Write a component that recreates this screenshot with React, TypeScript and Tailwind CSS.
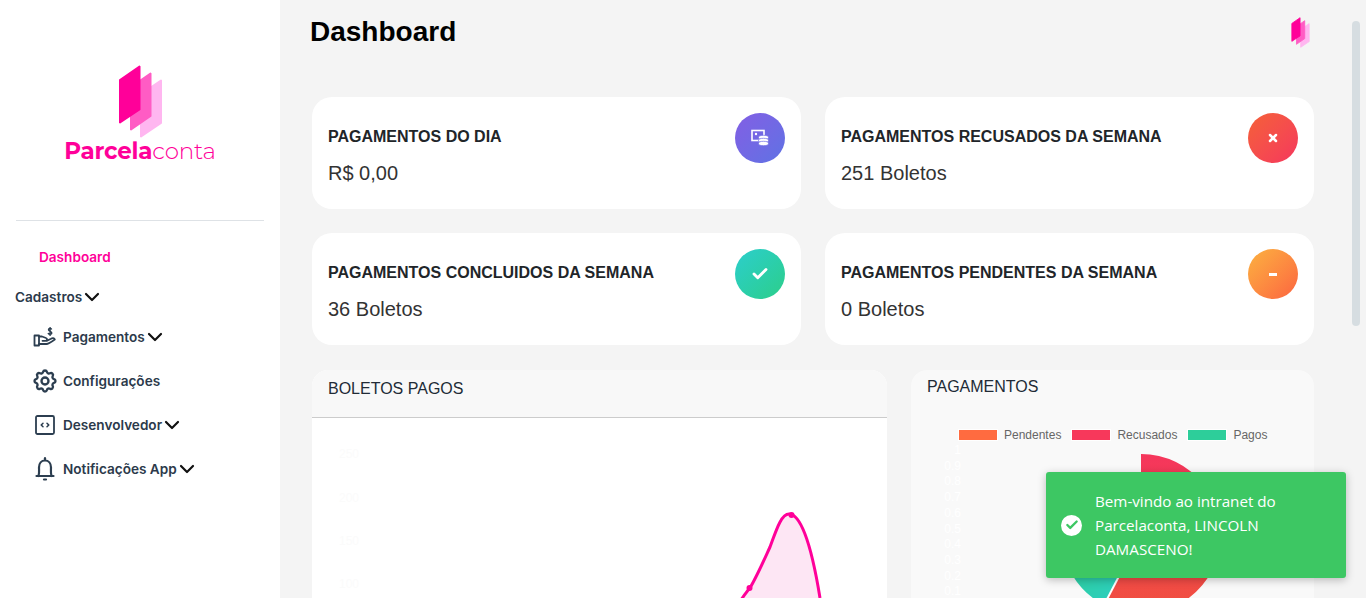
import { Check, ChevronDown, X } from "lucide-react";
import { TbSettings } from "react-icons/tb";
import type { ReactNode } from "react";

const sans = "font-['Liberation_Sans',Arial,sans-serif]";

function Logo({ className }: { className: string }) {
  return (
    <svg viewBox="118 64 45 73" className={className}>
      <path d="M141 93 L161 79.500 L161 122 L141 135.500 Z" fill="#ffb6f0" stroke="#ffb6f0" strokeWidth="2" strokeLinejoin="round" />
      <path d="M131 86 L150.500 72.500 L150.500 115 L131 128.500 Z" fill="#ff5cc4" stroke="#ff5cc4" strokeWidth="2" strokeLinejoin="round" />
      <path d="M120 79 L139.500 65.500 L139.500 108.500 L120 121.500 Z" fill="#ff0099" stroke="#ff0099" strokeWidth="2" strokeLinejoin="round" />
    </svg>
  );
}

function HandIcon() {
  return (
    <svg viewBox="0 0 23 20" className="w-[23px] h-5 text-[#2c3e50]" fill="none" stroke="currentColor" strokeWidth="1.800" strokeLinejoin="round" strokeLinecap="round">
      <path d="M1.500 8.500 H6 V18.500 H1.500 Z" />
      <path d="M6 9.500 H9 L13 11 C14.500 11.500 14.500 13.800 12.500 13.800 H9.500" />
      <path d="M6 17 H13.500 C15.500 17 19 14.500 21.800 12.500 C21 11 19.500 10.800 18 11.800 L14 13.800" />
      <path d="M18.500 2 C18 1.200 15.500 1 15.500 2.800 C15.500 4.800 18.800 4 18.800 5.900 C18.800 7.500 16 7.500 15.300 6.500 M17.100 .4 V8.400" strokeWidth="1.400" />
    </svg>
  );
}

function CodeIcon() {
  return (
    <svg viewBox="0 0 20 20" className="w-5 h-5 text-[#2c3e50]" fill="none" stroke="currentColor" strokeLinecap="round" strokeLinejoin="round">
      <rect x="1" y="1" width="18" height="18" rx="1.500" strokeWidth="1.800" />
      <path d="M8 8.200 L6.200 10 L8 11.800 M12 8.200 L13.800 10 L12 11.800" strokeWidth="1.500" />
    </svg>
  );
}

function BellIcon() {
  return (
    <svg viewBox="0 0 20 24" className="w-5 h-6 text-[#2c3e50]" fill="none" stroke="currentColor" strokeWidth="2.200" strokeLinecap="round" strokeLinejoin="round">
      <path d="M1.500 19 H18.500" />
      <path d="M3.500 19 C4.500 16 4 13 4 10.500 C4 6.500 6.500 3.500 10 3.500 C13.500 3.500 16 6.500 16 10.500 C16 13 15.500 16 16.500 19" />
      <path d="M10 1.200 V3" />
      <path d="M9 22.500 H11" />
    </svg>
  );
}

function CoinsScreenIcon() {
  return (
    <svg viewBox="0 0 18 18" className="w-[18px] h-[18px]" fill="none" stroke="white">
      <rect x="1" y="1.500" width="12" height="10" strokeWidth="1.600" />
      <circle cx="5" cy="5" r="1.200" fill="white" stroke="none" />
      <ellipse cx="12.500" cy="8.500" rx="5" ry="2.200" fill="white" stroke="#6a68e4" strokeWidth=".7" />
      <ellipse cx="12.500" cy="11.500" rx="5" ry="2.200" fill="white" stroke="#6a68e4" strokeWidth=".7" />
      <ellipse cx="12.500" cy="14.500" rx="5" ry="2.200" fill="white" stroke="#6a68e4" strokeWidth=".7" />
    </svg>
  );
}

function NavRow({ icon, label, chevron, rowClass }: { icon?: ReactNode; label: string; chevron?: boolean; rowClass: string }) {
  return (
    <div className={`flex items-center ${rowClass}`}>
      {icon && <span className="w-[37px] flex justify-center shrink-0">{icon}</span>}
      <span className="text-[13.600px] font-semibold text-[#2c3a4b] font-['Inter',sans-serif]">{label}</span>
      {chevron && <ChevronDown size={24} strokeWidth={2.200} className="text-[#111] -ml-[2px]" />}
    </div>
  );
}

function StatCard({ title, value, gradient, icon }: { title: string; value: string; gradient: string; icon: ReactNode }) {
  return (
    <div className="h-[112px] bg-white rounded-[20px] p-4 flex justify-between">
      <div>
        <p className="text-base font-bold leading-none mt-[16px] text-[#212529]">{title}</p>
        <p className="text-xl leading-none mt-[18px] text-[#333]">{value}</p>
      </div>
      <div className={`w-[50px] h-[50px] rounded-full flex items-center justify-center ${gradient}`}>{icon}</div>
    </div>
  );
}

export default function App() {
  const yLabels = ["1", "0.9", "0.8", "0.7", "0.6", "0.5", "0.4", "0.3", "0.2", "0.1"];

  return (
    <div className={`relative h-[598px] overflow-hidden flex bg-[#f4f4f4] ${sans}`}>
      <aside className="w-[280px] shrink-0 bg-white">
        <div className="h-[221px] mx-4 border-b border-[#dee2e6] flex flex-col items-center pt-[65px]">
          <Logo className="w-[45px] h-[73px] ml-px" />
          <p className="text-[23px] leading-none mt-[2px] text-[#ff0099] font-['Montserrat','Inter',sans-serif] tracking-[-0.2px]">
            <span className="font-bold">Parcela</span>
            <span className="font-light">conta</span>
          </p>
        </div>
        <nav className="pt-[16px]">
          <p className="pl-[39px] h-10 text-[13.600px] leading-10 font-semibold text-[#ff0099] font-['Inter',sans-serif]">Dashboard</p>
          <NavRow label="Cadastros" chevron rowClass="pl-[15px] h-10" />
          <NavRow icon={<HandIcon />} label="Pagamentos" chevron rowClass="pl-[26px] h-10" />
          <NavRow icon={<TbSettings size={28} strokeWidth={2} className="text-[#2c3e50]" />} label="Configurações" rowClass="pl-[26px] h-[48px]" />
          <NavRow icon={<CodeIcon />} label="Desenvolvedor" chevron rowClass="pl-[26px] h-10" />
          <NavRow icon={<BellIcon />} label="Notificações App" chevron rowClass="pl-[26px] h-[48px]" />
        </nav>
      </aside>

      <main className="flex-1 pl-[32px] pr-[52px]">
        <header className="h-[97px] flex justify-between items-start">
          <h1 className="text-[28px] leading-none font-bold text-black -ml-[2px] mt-[18px]">Dashboard</h1>
          <Logo className="w-[19px] h-[31px] mt-[17px] mr-[4px]" />
        </header>

        <div className="grid grid-cols-2 gap-6">
          <StatCard title="PAGAMENTOS DO DIA" value="R$ 0,00" gradient="bg-linear-to-br from-[#825ee4] to-[#5e72e4]" icon={<CoinsScreenIcon />} />
          <StatCard title="PAGAMENTOS RECUSADOS DA SEMANA" value="251 Boletos" gradient="bg-linear-to-br from-[#f56036] to-[#f5365c]" icon={<X size={12} strokeWidth={5} className="text-white" />} />
          <StatCard title="PAGAMENTOS CONCLUIDOS DA SEMANA" value="36 Boletos" gradient="bg-linear-to-br from-[#2dcecc] to-[#2dce89]" icon={<Check size={18} strokeWidth={3.800} className="text-white" />} />
          <StatCard title="PAGAMENTOS PENDENTES DA SEMANA" value="0 Boletos" gradient="bg-linear-to-br from-[#fbb140] to-[#fb6340]" icon={<span className="w-2 h-[3px] bg-white" />} />
        </div>

        <div className="flex gap-6 mt-[25px]">
          <section className="w-[575px] h-[300px] bg-white rounded-t-[16px] overflow-hidden">
            <div className="h-[48px] bg-[#f8f8f8] border-b border-[#cccccc] pl-4 pt-[10px] text-base leading-[18px] text-[#212b36]">BOLETOS PAGOS</div>
            <svg viewBox="0 0 575 252" className="w-[575px] h-[252px]">
              <defs>
                <clipPath id="plotArea">
                  <rect x="0" y="0" width="575" height="180" />
                </clipPath>
              </defs>
              <g fill="#fbfbfb" fontSize="12" textAnchor="middle">
                <text x="37" y="40">250</text>
                <text x="37" y="84">200</text>
                <text x="37" y="127">150</text>
                <text x="37" y="170">100</text>
              </g>
              <g clipPath="url(#plotArea)">
                <path d="M424 188 C431 180 434 174 438 170 C446 156 452 142 458 129 C464 113 469 96 477 96 C487 96 498 118 508 180 L510 200 L424 200 Z" fill="#fde6f4" />
                <path d="M424 188 C431 180 434 174 438 170 C446 156 452 142 458 129 C464 113 469 96 477 96 C487 96 498 118 508 180" fill="none" stroke="#ff0099" strokeWidth="3" />
                <circle cx="437.500" cy="170" r="3" fill="#ff0099" />
                <circle cx="479.500" cy="97" r="3" fill="#ff0099" />
              </g>
            </svg>
          </section>

          <section className="flex-1 h-[300px] bg-[#f9f9f9] rounded-t-[16px] overflow-hidden">
            <p className="pl-4 pt-[8px] text-base leading-[18px] text-[#212b36]">PAGAMENTOS</p>
            <div className="flex items-center mt-[32px] pl-[47px] h-[14px] text-xs text-[#666]">
              <span className="w-10 h-3 bg-[#ff6b40] border border-white" />
              <span className="ml-[6px]">Pendentes</span>
              <span className="w-10 h-3 bg-[#f7385b] border border-white ml-[10px]" />
              <span className="ml-[6px]">Recusados</span>
              <span className="w-10 h-3 bg-[#2dce9a] border border-white ml-[10px]" />
              <span className="ml-[6px]">Pagos</span>
            </div>
            <svg viewBox="0 0 403 180" className="w-[403px] h-[180px]">
              <defs>
                <linearGradient id="redSlice" x1="0" y1="0" x2="0" y2="1">
                  <stop offset="0" stopColor="#f5365c" />
                  <stop offset="1" stopColor="#f0503f" />
                </linearGradient>
                <linearGradient id="tealSlice" x1="0" y1="0" x2="1" y2="1">
                  <stop offset="0" stopColor="#2dce89" />
                  <stop offset="1" stopColor="#2dcecc" />
                </linearGradient>
              </defs>
              <g fill="white" fontSize="12" textAnchor="end">
                {yLabels.map((label, i) => (
                  <text key={label} x="50" y={12 + i * 15.700}>{label}</text>
                ))}
              </g>
              <path d="M230 92 L193 163 A80 80 0 0 1 150 92 Z" fill="url(#tealSlice)" />
              <path d="M230 12 A80 80 0 1 1 193 163 L230 92 Z" fill="url(#redSlice)" />
              <path d="M230 92 L193 163" stroke="white" strokeWidth="2" />
            </svg>
          </section>
        </div>
      </main>

      <div className="absolute left-[1352px] top-[21px] w-2 h-[305px] rounded-full bg-[#d6dde1]" />

      <div className="absolute left-[1046px] top-[472px] w-[300px] h-[106px] rounded-[3px] bg-[#3dc763] shadow-[0_2px_8px_rgba(0,0,0,0.25)] flex items-center pl-[15px] pr-4 text-white font-['Open_Sans',sans-serif] text-[15.200px] leading-6">
        <span className="w-[21px] h-[21px] rounded-full bg-white flex items-center justify-center shrink-0">
          <Check size={14} strokeWidth={4} className="text-[#3dc763]" />
        </span>
        <p className="ml-[13px] -mt-px">Bem-vindo ao intranet do Parcelaconta, LINCOLN DAMASCENO!</p>
      </div>
    </div>
  );
}
